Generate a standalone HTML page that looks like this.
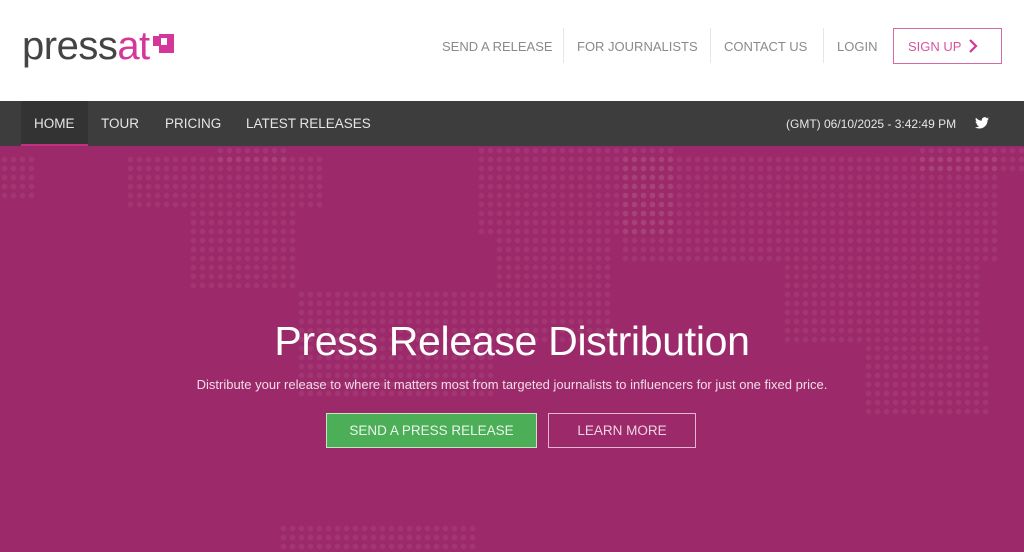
<!DOCTYPE html>
<html><head><style>
*{margin:0;padding:0;box-sizing:border-box}
body{width:1024px;height:552px;overflow:hidden;font-family:"Liberation Sans",sans-serif;background:#fff;position:relative}
.abs{position:absolute}
.nav a{position:absolute;top:39px;font-size:13px;color:#8a8a8a;white-space:nowrap}
.sep{position:absolute;top:28px;width:1px;height:35px;background:#e6e6e6}
.bar{top:101px;left:0;width:1024px;height:45px;background:#3d3d3d}
.bar span{position:absolute;top:15px;font-size:13.5px;color:#e6e6e6;white-space:nowrap}
.hero{top:146px;left:0;width:1024px;height:406px;background:#9c2a6a;overflow:hidden}
.dots{position:absolute;background-image:radial-gradient(circle,rgba(255,255,255,.055) 2.6px,transparent 3px);background-size:9px 9px}
</style></head><body>
<div class="abs" style="left:22px;top:22px;font-size:40px;letter-spacing:-0.5px;color:#444;line-height:48px">press<span style="color:#d4369a">at</span></div>
<div class="abs" style="left:153px;top:36px;width:6px;height:10px;background:#d4369a"></div>
<div class="abs" style="left:159px;top:34px;width:15px;height:19px;background:#d4369a"></div>
<div class="abs" style="left:161px;top:38px;width:6px;height:7px;background:#fff"></div>
<div class="nav">
<a style="left:442px">SEND A RELEASE</a><div class="sep" style="left:563px"></div>
<a style="left:577px">FOR JOURNALISTS</a><div class="sep" style="left:710px"></div>
<a style="left:724px">CONTACT US</a><div class="sep" style="left:823px"></div>
<a style="left:837px">LOGIN</a>
</div>
<div class="abs" style="left:893px;top:28px;width:109px;height:36px;border:1px solid #d46aa8"></div>
<div class="abs" style="left:908px;top:39px;font-size:13px;color:#d4569e">SIGN UP</div>
<svg class="abs" style="left:968px;top:39px" width="10" height="14"><path d="M2 1 L8 7 L2 13" stroke="#d4369a" stroke-width="2.2" fill="none"/></svg>
<div class="abs bar">
<div class="abs" style="left:21px;top:0;width:67px;height:45px;background:#333;border-bottom:2px solid #c0307f"></div>
<span style="left:34px">HOME</span><span style="left:101px">TOUR</span><span style="left:165px">PRICING</span><span style="left:246px">LATEST RELEASES</span>
<span style="left:786px;font-size:12px;top:16px">(GMT) 06/10/2025 - 3:42:49 PM</span>
<svg class="abs" style="left:975px;top:16px" width="14" height="12" viewBox="0 0 24 20"><path fill="#fff" d="M24 2.4a10 10 0 0 1-2.8.8A5 5 0 0 0 23.3.4a10 10 0 0 1-3.1 1.2A4.9 4.9 0 0 0 11.8 6 14 14 0 0 1 1.7.9a4.9 4.9 0 0 0 1.5 6.6A4.9 4.9 0 0 1 1 6.9a4.9 4.9 0 0 0 3.9 4.8 5 5 0 0 1-2.2.1 4.9 4.9 0 0 0 4.6 3.4A9.9 9.9 0 0 1 0 17.3 14 14 0 0 0 7.5 19.5c9.1 0 14-7.5 14-14v-.6A10 10 0 0 0 24 2.4z"/></svg>
</div>
<div class="abs hero">
<div class="dots" style="left:0;top:9px;width:36px;height:45px"></div>
<div class="dots" style="left:126px;top:9px;width:198px;height:54px"></div>
<div class="dots" style="left:189px;top:63px;width:108px;height:81px"></div>
<div class="dots" style="left:216px;top:0;width:72px;height:18px"></div>
<div class="dots" style="left:297px;top:144px;width:198px;height:108px"></div>
<div class="dots" style="left:477px;top:0;width:198px;height:90px"></div>
<div class="dots" style="left:495px;top:90px;width:117px;height:108px"></div>
<div class="dots" style="left:621px;top:9px;width:378px;height:108px"></div>
<div class="dots" style="left:783px;top:117px;width:198px;height:81px"></div>
<div class="dots" style="left:864px;top:198px;width:126px;height:72px"></div>
<div class="dots" style="left:918px;top:0;width:106px;height:27px"></div>
<div class="dots" style="left:279px;top:378px;width:198px;height:28px"></div>
</div>
<div class="abs" style="left:0;top:318px;width:1024px;text-align:center;font-size:41px;color:#fff;letter-spacing:-0.3px">Press Release Distribution</div>
<div class="abs" style="left:0;top:377px;width:1024px;text-align:center;font-size:13px;color:#f2dbe8">Distribute your release to where it matters most from targeted journalists to influencers for just one fixed price.</div>
<div class="abs" style="left:326px;top:413px;width:211px;height:35px;background:#4caf58;border:1px solid #c5e6c5;color:#e8f6e8;font-size:13.5px;text-align:center;line-height:33px">SEND A PRESS RELEASE</div>
<div class="abs" style="left:548px;top:413px;width:148px;height:35px;border:1px solid #e3b7d2;color:#f0d3e4;font-size:13.5px;text-align:center;line-height:33px">LEARN MORE</div>
</body></html>
